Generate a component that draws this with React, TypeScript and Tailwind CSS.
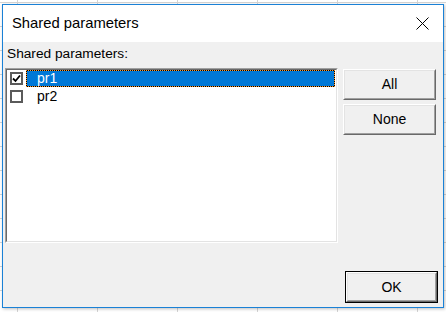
import React from "react";

const font = { fontFamily: '"Liberation Sans", Arial, sans-serif' };

function Btn({ label, isDefault }: { label: string; isDefault?: boolean }) {
  const inner = (
    <div className="h-full w-full border-t border-l border-t-white border-l-white border-b border-r border-b-[#696969] border-r-[#696969]">
      <div className="h-full w-full border-b border-r border-b-[#a0a0a0] border-r-[#a0a0a0] border-t border-l border-t-[#e3e3e3] border-l-[#e3e3e3] bg-[#f0f0f0] flex items-center justify-center text-[14px] text-black">
        {label}
      </div>
    </div>
  );
  if (isDefault) {
    return <div className="w-[93px] h-[32px] border border-black">{inner}</div>;
  }
  return <div className="w-[93px] h-[31px]">{inner}</div>;
}

function Check({ checked }: { checked?: boolean }) {
  return (
    <div className="w-[13px] h-[13px] border-2 border-[#5a5a5a] bg-white flex items-center justify-center">
      {checked && (
        <svg width="9" height="9" viewBox="0 0 9 9">
          <path d="M1 4.5 L3.5 7 L8 1.5" stroke="#000" strokeWidth="1.8" fill="none" />
        </svg>
      )}
    </div>
  );
}

export default function App() {
  const vlines = [17, 97, 177, 257, 337, 417];
  const hlines = [2, 26, 50, 74, 98, 122, 146, 170, 194, 218, 242, 266, 290];
  return (
    <div className="relative w-[446px] h-[312px] bg-white overflow-hidden" style={font}>
      <svg className="absolute inset-0" width="446" height="312">
        {vlines.map((x) => (
          <line key={"v" + x} x1={x + 0.5} y1={0} x2={x + 0.5} y2={312} stroke="#d4d4d4" strokeWidth="1" />
        ))}
        {hlines.map((y) => (
          <line key={"h" + y} x1={0} y1={y + 0.5} x2={446} y2={y + 0.5} stroke="#d4d4d4" strokeWidth="1" />
        ))}
      </svg>
      <div className="absolute left-[2px] top-[4px] w-[442px] h-[304px] border border-[#1a81d6] shadow-[1px_1px_3px_rgba(0,0,0,0.25)] flex flex-col bg-[#f0f0f0]">
        <div className="h-[37px] bg-white flex items-center justify-between pl-[9px] pr-[14px]">
          <span className="text-[14.8px] text-black">Shared parameters</span>
          <svg width="13" height="13" viewBox="0 0 13 13">
            <path d="M0.5 0.5 L12.5 12.5 M12.5 0.5 L0.5 12.5" stroke="#000" strokeWidth="1" fill="none" />
          </svg>
        </div>
        <div className="flex-1 flex flex-col pl-[2px]">
          <div className="h-[26px] pl-[2px] pt-[4px] text-[13.7px] leading-[16px] text-black">Shared parameters:</div>
          <div className="flex">
            <div className="w-[333px] h-[175px] border-t border-l border-t-[#a0a0a0] border-l-[#a0a0a0] border-b border-r border-b-white border-r-white">
              <div className="w-full h-full border-t border-l border-t-[#696969] border-l-[#696969] border-b border-r border-b-[#e3e3e3] border-r-[#e3e3e3] bg-white">
                <div className="flex items-center h-[17px]">
                  <div className="w-[19px] pl-[3px] flex items-center"><Check checked /></div>
                  <div className="flex-1 mr-[1px] h-[17px] bg-black border border-dotted border-[#ff9a2e]">
                    <div className="h-full bg-[#0078d7] text-white text-[14px] leading-[15px] pl-[10px]">pr1</div>
                  </div>
                </div>
                <div className="flex items-center h-[17px] mt-[1px]">
                  <div className="w-[19px] pl-[3px] flex items-center"><Check /></div>
                  <div className="flex-1 text-black text-[14px] leading-[15px] pl-[11px]">pr2</div>
                </div>
              </div>
            </div>
            <div className="ml-[5px] mt-[1px] flex flex-col gap-[4px]">
              <Btn label="All" />
              <Btn label="None" />
            </div>
          </div>
          <div className="mt-auto mb-[4px] ml-[340px]">
            <Btn label="OK" isDefault />
          </div>
        </div>
      </div>
    </div>
  );
}
